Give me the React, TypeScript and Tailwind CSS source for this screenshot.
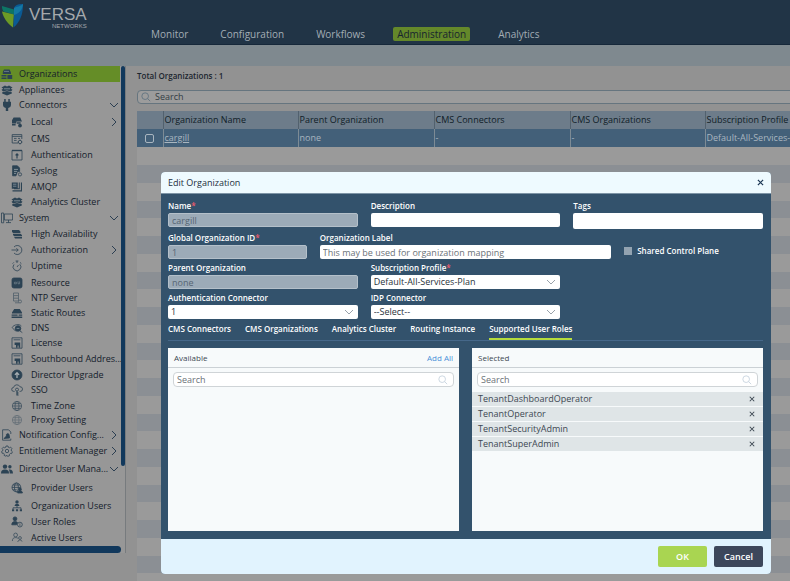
import React from 'react';

type IconName =
  | 'org' | 'appliance' | 'plug' | 'local' | 'cms' | 'auth' | 'syslog' | 'amqp' | 'system' | 'ha'
  | 'login' | 'uptime' | 'resource' | 'ntp' | 'routes' | 'dns' | 'license' | 'upgrade' | 'sso'
  | 'globe' | 'proxy' | 'notify' | 'gear' | 'users' | 'provider' | 'orgusers' | 'roles' | 'active';

const globe = (
  <g>
    <circle cx="6" cy="6" r="4.6" />
    <ellipse cx="6" cy="6" rx="2" ry="4.6" />
    <path d="M1.4 6h9.2M2.2 3.6h7.6M2.2 8.4h7.6" />
  </g>
);

const icons: Record<IconName, React.ReactNode> = {
  org: (
    <g fill="currentColor" stroke="none">
      <path d="M3 1.5h5.5l1.5 3v1.6H1.8V4z" />
      <path d="M.5 7h5v1.6h-5zM.5 9.4h5V11h-5zM6.4 7h4.8v4H6.4z" />
      <path d="M3 3.4h5" stroke="#8fa0a8" strokeWidth=".6" />
    </g>
  ),
  appliance: (
    <g fill="currentColor" stroke="none">
      <path d="M.5 3.6 4 1.6l2 1 2-1 3.5 2-1.8 1.2 1.8 1L10 7.6 6 6.4 2 7.6.5 5.8l1.8-1z" />
      <path d="M1.2 8.2 6 7l4.8 1.2v1.4L6 11.4 1.2 9.6z" />
      <path d="M3 4.8h6" stroke="#9aa4aa" strokeWidth=".7" />
    </g>
  ),
  plug: (
    <g fill="currentColor" stroke="none">
      <path d="M3.2 0h1.500v3H3.200zM7.300 0h1.500v3H7.300zM2 2.800h8v3c0 1.800-1.200 3-2.800 3.200V12H4.800V9C3.200 8.800 2 7.600 2 5.800z" />
    </g>
  ),
  local: (
    <g fill="currentColor" stroke="none">
      <path d="M2.600 1.600h6.600l1.800 3.800H5.400v2H1V4.200z" />
      <path d="M1 8h3.600v1.400H1zM6 6.200h3.600v1.600H6z" />
      <circle cx="9" cy="9.600" r="1.900" />
    </g>
  ),
  cms: (
    <g>
      <path d="M7 10H1.200V1.600h9.600V6" />
      <path d="M1.200 3.400h9.600M3 5.400h2.600M3 7.400h2.600M7 5.400h2" />
      <circle cx="9" cy="9" r="1.700" />
      <path d="M9 6.600v.8M9 10.600v.8M6.600 9h.8M10.600 9h.8" />
    </g>
  ),
  auth: (
    <g>
      <path d="M1 1.500h10v9.500H1z" />
      <path d="M1 1.500h10" strokeWidth="1.400" />
      <path d="M6 9.400V5M4.600 6.400 6 4.800l1.400 1.600" strokeWidth="1.200" />
    </g>
  ),
  syslog: (
    <g>
      <path d="M1.600.8h4.800L8.600 3v3.600H6.400L5 10.800H1.600z" fill="currentColor" />
      <path d="M3 4.400h4M3 6.400h3M3 8.400h2" stroke="#98a2a8" />
      <circle cx="9" cy="9.400" r="1.600" />
    </g>
  ),
  amqp: (
    <g fill="currentColor" stroke="none">
      <path d="M.8 1.500h6v6.300h-6zM7.800 1.500h1v6.700H3v-1h4.800zM9.900 1.500H11v9H1.500V9.200h8.400z" />
      <path d="M2 3.200h3.400M2 5.200h3.400" stroke="#9aa4aa" strokeWidth=".7" />
    </g>
  ),
  system: (
    <g>
      <path d="M3.400 2h8.200v6H3.400z" />
      <path d="M.5 1h2.200v9.800H.5zM5 10.600h5M7.500 8v2.600" />
    </g>
  ),
  ha: (
    <g fill="currentColor" stroke="none">
      <path d="M1 2h7l1.400 1.400V5H2.200L1 4zM2 5.800h7.400L11 7v1H3L2 7zM3 8.800h8v1.700H4z" />
    </g>
  ),
  login: (
    <g>
      <path d="M3 3a4.500 4.500 0 1 1 0 6" />
      <path d="M.5 6h6.700M5.400 4.200 7.200 6 5.400 7.800" />
    </g>
  ),
  uptime: (
    <g>
      <path d="M8.800 4.200A3.900 3.900 0 1 1 3 4.400" />
      <path d="M4.600 1h2.800M6 1v2M6 7l1.500-2M9 2.400l1.400 1.300M2.800 2.400 1.600 3.600" />
    </g>
  ),
  resource: (
    <g>
      <rect x="1" y="1" width="10" height="10" rx="1.800" fill="currentColor" />
      <path d="M3.400 5.200h2v1.600h-2zM7 4.400v2.400h1.600V4.400" stroke="#7d8b95" strokeWidth=".6" />
    </g>
  ),
  ntp: (
    <g opacity=".65">
      <path d="M2.500 1h5v8h-5zM2.500 3.600h5M2.500 6.200h5M4 10.800h4" />
      <circle cx="9" cy="9.500" r="1.500" />
    </g>
  ),
  routes: (
    <g fill="currentColor" stroke="none">
      <path d="M3.200 2h5.600L11 5.400v1.200H1V5.400zM.6 7.400h6v1.400h-6zM.6 9.600h10.600V11H.6zM7.600 7.400h3.600v1.400H7.600z" />
    </g>
  ),
  dns: (
    <g>
      <path d="M1 5.500c2-3 7-4 9.400-1.500M1.500 5.500c1 2 2 3 4 3.600" />
      <circle cx="7" cy="6.500" r="2.800" fill="currentColor" />
      <path d="M9 9l2.300 1.600M5.800 5.600h2.400" />
      <path d="M5.600 6.400h2.800" stroke="#9aa4aa" strokeWidth=".7" />
    </g>
  ),
  license: (
    <g>
      <path d="M1 .8h10v10.400H1z" />
      <path d="M2.600 2.800h6.800" />
      <path d="M3.600 5.500h5.600v5.200H7.600V8.500h-1v2.200H5V8H3.600z" fill="currentColor" stroke="none" />
    </g>
  ),
  upgrade: (
    <g>
      <circle cx="6" cy="6" r="5" fill="currentColor" />
      <path d="M6 9V4.200M3.900 5.900 6 3.700l2.100 2.200" stroke="#a7aeb2" strokeWidth="1.300" />
    </g>
  ),
  sso: (
    <g>
      <path d="M3.600 7.400H2.800a2 2 0 0 1-.2-4A3.400 3.400 0 0 1 9 2.800a2.300 2.300 0 0 1 .4 4.600h-.8" />
      <circle cx="6" cy="5.600" r="1.500" />
      <path d="M6 7.200v4.400M6 9h1.600M6 11h1.600" strokeWidth="1.200" />
    </g>
  ),
  globe: <g opacity=".8">{globe}</g>,
  proxy: <g opacity=".45">{globe}</g>,
  notify: (
    <g>
      <path d="M9.800 5V3L7.600.8H1.600v10.400h8.200V9.600" />
      <path d="M3 9.500 5.400 7V5.400a1.500 1.500 0 0 1 2.800.8L8.600 9z" fill="currentColor" />
    </g>
  ),
  gear: (
    <g>
      <circle cx="6" cy="6" r="1.700" />
      <path d="M5 1h2l.3 1.300 1.100.5L9.600 2.100 11 3.700l-.8 1.100.2 1.200 1 .8-.8 1.800-1.300-.1-.9.900.1 1.300-1.900.7L6 10.300l-1.100.9-1.800-.8.200-1.300-.8-.9-1.300.1L.6 6.500l1.100-.7.200-1.100-.8-1.100 1.400-1.500 1.200.7 1-.5z" />
    </g>
  ),
  users: (
    <g fill="currentColor" stroke="none">
      <circle cx="4" cy="3.600" r="2.200" />
      <path d="M0 10.400c0-2.600 1.200-3.800 4-3.800s4 1.200 4 3.800z" />
      <circle cx="8.900" cy="3.800" r="1.700" />
      <path d="M8.700 10.400c0-1.800-.2-2.900-1-3.900 2.600-.5 4.300.7 4.300 3.900z" />
    </g>
  ),
  provider: (
    <g>
      <circle cx="5.400" cy="5.400" r="4.400" />
      <ellipse cx="5.400" cy="5.400" rx="2" ry="4.400" />
      <path d="M1 5.400h8.800M1.800 3h7.200M1.800 7.800h4" />
      <circle cx="9" cy="7.400" r="1.400" fill="currentColor" />
      <path d="M6.600 11c0-1.500.8-2 2.400-2s2.400.5 2.400 2z" fill="currentColor" />
    </g>
  ),
  orgusers: (
    <g fill="currentColor" stroke="none">
      <circle cx="6" cy="2" r="1.700" />
      <path d="M3.600 6c0-1.500.8-2.100 2.400-2.100S8.400 4.500 8.400 6z" />
      <path d="M6 6v2M2 9V7.800h8V9" fill="none" stroke="currentColor" />
      <path d="M1 9.200h2.200v2H1zM4.900 9.200h2.200v2H4.900zM8.800 9.200H11v2H8.800z" />
    </g>
  ),
  roles: (
    <g>
      <circle cx="4" cy="2.800" r="1.900" fill="currentColor" />
      <path d="M.8 8.800c0-2.200 1-3.200 3.200-3.200 1.200 0 2 .3 2.500.9L5.600 8.800z" fill="currentColor" />
      <circle cx="8.900" cy="8.600" r="2.400" />
      <path d="M8.900 8.200v1.700M8.900 7v.6" />
    </g>
  ),
  active: (
    <g opacity=".85">
      <circle cx="4.600" cy="3" r="1.900" />
      <path d="M1.400 9c0-2.400 1-3.400 3.200-3.400 1 0 1.800.2 2.300.7" />
      <circle cx="9" cy="6" r="1.400" />
      <path d="M6.800 10c.2-1.400 1-2 2.200-2s1.800.6 2 1.600" />
    </g>
  ),
};

function Icon({ name }: { name: IconName }) {
  return (
    <svg viewBox="0 0 12 12" className="size-3 shrink-0 text-[#2c4354]" fill="none" stroke="currentColor" strokeWidth=".8" aria-hidden="true">
      {icons[name]}
    </svg>
  );
}

function Chevron({ open, className = '' }: { open: boolean; className?: string }) {
  return (
    <svg viewBox="0 0 10 10" className={`size-[10px] shrink-0 ${className}`} fill="none" stroke="currentColor" strokeWidth="1" aria-hidden="true">
      <path d={open ? 'M1 3l4 4 4-4' : 'M3 1l4 4-4 4'} />
    </svg>
  );
}

function SearchIcon({ className }: { className: string }) {
  return (
    <svg viewBox="0 0 12 12" className={className} fill="none" stroke="currentColor" strokeWidth="1" aria-hidden="true">
      <circle cx="5" cy="5" r="4" />
      <path d="M8 8l3 3" />
    </svg>
  );
}

type Item = { label: string; icon: IconName; height: string; child?: boolean; open?: boolean; active?: boolean };

const items: Item[] = [
  { label: 'Organizations', icon: 'org', height: 'h-4', active: true },
  { label: 'Appliances', icon: 'appliance', height: 'h-[15px]' },
  { label: 'Connectors', icon: 'plug', height: 'h-4', open: true },
  { label: 'Local', icon: 'local', height: 'h-[18px]', child: true, open: false },
  { label: 'CMS', icon: 'cms', height: 'h-4', child: true },
  { label: 'Authentication', icon: 'auth', height: 'h-4', child: true },
  { label: 'Syslog', icon: 'syslog', height: 'h-4', child: true },
  { label: 'AMQP', icon: 'amqp', height: 'h-[15px]', child: true },
  { label: 'Analytics Cluster', icon: 'appliance', height: 'h-4', child: true },
  { label: 'System', icon: 'system', height: 'h-[15px]', open: true },
  { label: 'High Availability', icon: 'ha', height: 'h-[18px]', child: true },
  { label: 'Authorization', icon: 'login', height: 'h-[14px]', child: true, open: false },
  { label: 'Uptime', icon: 'uptime', height: 'h-[18px]', child: true },
  { label: 'Resource', icon: 'resource', height: 'h-4', child: true },
  { label: 'NTP Server', icon: 'ntp', height: 'h-[14px]', child: true },
  { label: 'Static Routes', icon: 'routes', height: 'h-[15px]', child: true },
  { label: 'DNS', icon: 'dns', height: 'h-[15px]', child: true },
  { label: 'License', icon: 'license', height: 'h-4', child: true },
  { label: 'Southbound Addres...', icon: 'license', height: 'h-4', child: true },
  { label: 'Director Upgrade', icon: 'upgrade', height: 'h-[15px]', child: true },
  { label: 'SSO', icon: 'sso', height: 'h-4', child: true },
  { label: 'Time Zone', icon: 'globe', height: 'h-[15px]', child: true },
  { label: 'Proxy Setting', icon: 'proxy', height: 'h-[14px]', child: true },
  { label: 'Notification Config...', icon: 'notify', height: 'h-[15px]', open: false },
  { label: 'Entitlement Manager', icon: 'gear', height: 'h-[18px]', open: false },
  { label: 'Director User Mana...', icon: 'users', height: 'h-[18px]', open: true },
  { label: 'Provider Users', icon: 'provider', height: 'h-5', child: true },
  { label: 'Organization Users', icon: 'orgusers', height: 'h-4', child: true },
  { label: 'User Roles', icon: 'roles', height: 'h-4', child: true },
  { label: 'Active Users', icon: 'active', height: 'h-4', child: true },
];

function Sidebar() {
  return (
    <aside className="w-[126px] shrink-0 self-start border-r border-[#777b7e] bg-[#979797]">
      <div className="flex">
        <nav className="min-w-0 flex-1" aria-label="Administration">
          <ul>
            {items.map((item) => (
              <li key={item.label} className={item.active ? 'bg-[#658d27]' : ''}>
                <a
                  href="#"
                  className={`flex items-center whitespace-nowrap pr-px text-[9px] text-[#14202b] ${item.height} ${item.child ? 'pl-[11px]' : 'pl-px'}`}
                >
                  <Icon name={item.icon} />
                  <span className={item.child ? 'pl-2' : 'pl-[6px]'}>{item.label}</span>
                  {item.open !== undefined && <Chevron open={item.open} className="ml-auto text-[#2c3f52]" />}
                </a>
              </li>
            ))}
          </ul>
        </nav>
        <div className="ml-px h-[400px] w-1 rounded-sm bg-[#11385c]" />
      </div>
      <div className="mr-1 h-[7px] rounded-r-sm bg-[#11385c]" />
    </aside>
  );
}

const tabs = ['Monitor', 'Configuration', 'Workflows', 'Administration', 'Analytics'];

function Header() {
  return (
    <header className="flex h-[45px] items-end border-b border-[#16283a] bg-[#213446]">
      <div className="flex w-[147px] shrink-0 gap-[6px] self-start pl-px pt-[3px]">
        <svg viewBox="0 0 22 25" className="h-[25px] w-[22px]" aria-hidden="true">
          <path d="M1 3 13 6.500v5L2.500 8.500C1.500 7 .8 5 1 3z" fill="#0d7566" />
          <path d="M1 8.500 13 11.500 12 24.500C6 20 2 14 1 8.500z" fill="#6c9a26" />
          <path d="M13 5C14 2 17 .8 22 1c.2 9-2.600 18-9.500 23.500z" fill="#0b5a94" />
          <path d="M13 5c3-2 6-1 9-4-.4 5-3 9-9 11z" fill="#1479a4" />
        </svg>
        <div className="flex flex-col items-end pt-1 font-['Liberation_Sans',sans-serif] text-[#a5a9ad]">
          <span className="text-[17px] leading-4">VERSA</span>
          <span className="text-[6px] leading-[6px]">NETWORKS</span>
        </div>
      </div>
      <nav className="flex gap-6 pb-[3px] text-[10px] leading-[14px] text-[#a3adb5]" aria-label="Main">
        {tabs.map((t) => (
          <a key={t} href="#" className={t === 'Administration' ? 'rounded-xs bg-[#64882a] px-1 text-[#17242e]' : 'px-1'}>
            {t}
          </a>
        ))}
      </nav>
    </header>
  );
}

const columns = ['Organization Name', 'Parent Organization', 'CMS Connectors', 'CMS Organizations', 'Subscription Profile'];
const stripes = Array.from({ length: 25 }, (_, i) => i);

function Main() {
  return (
    <main className="min-w-0 flex-1 overflow-hidden pl-[11px] text-[9px]">
      <h1 className="h-6 pt-[3px] text-[8px] font-semibold leading-[14px] text-[#1b252e]">Total Organizations : 1</h1>
      <div className="-mr-1 flex h-[14px] items-center gap-1 rounded-sm border border-[#66757f] bg-[#9c9c9c] pl-[3px]">
        <SearchIcon className="size-[10px] text-[#5d7180]" />
        <input aria-label="Search organizations" placeholder="Search" className="min-w-0 flex-1 bg-transparent text-[9px] leading-3 outline-none placeholder:text-[#343d44]" />
      </div>
      <table className="mt-[7px] w-[703px] table-fixed border-collapse text-left leading-3">
        <colgroup>
          <col className="w-[26px]" />
          <col className="w-[135px]" />
          <col className="w-[136px]" />
          <col className="w-[136px]" />
          <col className="w-[135px]" />
          <col className="w-[135px]" />
        </colgroup>
        <thead>
          <tr className="h-[18px] bg-[#6d7c8a] text-[#101c28]">
            <th />
            {columns.map((c) => (
              <th key={c} className="border-l border-[#52616e] p-0 pl-px font-normal">{c}</th>
            ))}
          </tr>
        </thead>
        <tbody>
          <tr className="h-[18px] bg-[#436079] text-[#a9b6c0]">
            <td className="p-0 text-center align-middle">
              <input type="checkbox" aria-label="Select cargill" className="mx-auto block size-[9px] appearance-none rounded-xs border border-[#a9b6c0]" />
            </td>
            <td className="border-l border-[#7d8b95] p-0 pl-px"><a href="#" className="underline">cargill</a></td>
            <td className="border-l border-[#7d8b95] p-0 pl-px">none</td>
            <td className="border-l border-[#7d8b95] p-0 pl-px">-</td>
            <td className="border-l border-[#7d8b95] p-0 pl-px">-</td>
            <td className="whitespace-nowrap border-l border-[#7d8b95] p-0 pl-px">Default-All-Services-Plan</td>
          </tr>
        </tbody>
      </table>
      <div aria-hidden="true">
        {stripes.map((i) => (
          <div key={i} className={`${i % 4 === 3 ? 'h-[17px]' : 'h-[18px]'} ${i % 2 ? 'bg-[#8b8f94]' : 'bg-[#9a9a9a]'}`} />
        ))}
      </div>
    </main>
  );
}

const inputBase = 'block w-full rounded-xs px-[3px] text-[9px] outline-none';

function Label({ id, text, required }: { id: string; text: string; required?: boolean }) {
  return (
    <label htmlFor={id} className="block h-[14px] whitespace-nowrap text-[8px] font-semibold leading-[14px] text-white">
      {text}
      {required && <span className="text-[#ef5a6b]">*</span>}
    </label>
  );
}

type FieldProps = { id: string; label: string; required?: boolean; value?: string; placeholder?: string; disabled?: boolean; tall?: boolean };

function Field({ id, label, required, value, placeholder, disabled, tall }: FieldProps) {
  return (
    <div>
      <Label id={id} text={label} required={required} />
      <input
        id={id}
        defaultValue={value}
        placeholder={placeholder}
        disabled={disabled}
        className={`${inputBase} ${tall ? 'h-4' : 'h-[14px]'} ${disabled ? 'border border-[#b4c0ca] bg-[#9cabb8] text-[#566573]' : 'bg-white text-[#3b4650] placeholder:text-[#6b7278]'}`}
      />
    </div>
  );
}

function SelectField({ id, label, required, value }: { id: string; label: string; required?: boolean; value: string }) {
  return (
    <div>
      <Label id={id} text={label} required={required} />
      <div className="grid items-center">
        <select id={id} defaultValue={value} className={`${inputBase} col-start-1 row-start-1 h-[14px] appearance-none bg-white text-[#2a333b]`}>
          <option>{value}</option>
        </select>
        <Chevron open className="pointer-events-none col-start-1 row-start-1 mr-1 justify-self-end text-[#9aa3ab]" />
      </div>
    </div>
  );
}

function PanelSearch({ label }: { label: string }) {
  return (
    <div className="mx-[5px] mt-1 flex h-[15px] items-center rounded-sm border border-[#cfd4d7] bg-white pl-[3px] pr-[5px]">
      <input aria-label={label} placeholder="Search" className="min-w-0 flex-1 text-[9px] leading-3 outline-none placeholder:text-[#6b7278]" />
      <SearchIcon className="size-[10px] text-[#c3d0dc]" />
    </div>
  );
}

const modalTabs = ['CMS Connectors', 'CMS Organizations', 'Analytics Cluster', 'Routing Instance', 'Supported User Roles'];
const roles = ['TenantDashboardOperator', 'TenantOperator', 'TenantSecurityAdmin', 'TenantSuperAdmin'];

function CloseIcon({ className }: { className: string }) {
  return (
    <svg viewBox="0 0 8 8" className={className} fill="none" stroke="currentColor" strokeWidth="1.400" aria-hidden="true">
      <path d="M1 1l6 6M7 1 1 7" />
    </svg>
  );
}

function Dialog() {
  return (
    <section role="dialog" aria-label="Edit Organization" className="absolute left-[161px] right-[19px] top-[172px] overflow-hidden rounded-sm bg-[#33526c]">
      <header className="flex h-[22px] items-center justify-between border-b border-[#7d94a6] bg-[#eefaff] px-[7px] text-[9px] text-[#1d2f40]">
        <h2>Edit Organization</h2>
        <button type="button" aria-label="Close"><CloseIcon className="size-[7px] text-[#1f3a57]" /></button>
      </header>

      <div className="pb-2 pl-[7px] pr-2 pt-[5px]">
        <form className="flex flex-col gap-[2px]">
          <div className="grid grid-cols-3 gap-[13px]">
            <Field id="name" label="Name" required value="cargill" disabled />
            <Field id="description" label="Description" />
            <Field id="tags" label="Tags" tall />
          </div>
          <div className="grid grid-cols-[1fr_2.1fr_1fr] gap-[13px]">
            <Field id="gid" label="Global Organization ID" required value="1" disabled />
            <Field id="olabel" label="Organization Label" placeholder="This may be used for organization mapping" />
            <label className="flex h-4 items-center gap-[5px] self-end whitespace-nowrap text-[8px] font-semibold text-white">
              <input type="checkbox" className="size-2 appearance-none bg-[#93a3b1]" />
              Shared Control Plane
            </label>
          </div>
          <div className="grid grid-cols-3 gap-[13px]">
            <Field id="parent" label="Parent Organization" value="none" disabled />
            <SelectField id="profile" label="Subscription Profile" required value="Default-All-Services-Plan" />
          </div>
          <div className="grid grid-cols-3 gap-[13px]">
            <SelectField id="authc" label="Authentication Connector" value="1" />
            <SelectField id="idp" label="IDP Connector" value="--Select--" />
          </div>
        </form>

        <div role="tablist" className="flex h-[22px] gap-[14px] border-b border-[#46688a] text-[8px] font-semibold text-white">
          {modalTabs.map((t, i) => (
            <button
              key={t}
              type="button"
              role="tab"
              aria-selected={i === 4}
              className={`border-b-2 whitespace-nowrap ${i === 4 ? 'border-[#b5dc3c]' : 'border-transparent'}`}
            >
              {t}
            </button>
          ))}
        </div>

        <div className="mt-[7px] grid h-[183px] grid-cols-2 gap-[13px] text-[8px] text-[#3d4852]">
          <div className="bg-[#f7fafb]">
            <div className="flex h-5 items-center justify-between border-b border-[#cbd1d5] px-[6px]">
              <h3>Available</h3>
              <button type="button" className="text-[#4a90d9]">Add All</button>
            </div>
            <PanelSearch label="Search available roles" />
          </div>
          <div className="bg-[#f7fafb]">
            <div className="flex h-5 items-center border-b border-[#cbd1d5] px-[6px]">
              <h3>Selected</h3>
            </div>
            <PanelSearch label="Search selected roles" />
            <ul className="mt-[5px] flex flex-col gap-px">
              {roles.map((r) => (
                <li key={r} className="flex h-[14px] items-center justify-between bg-[#dfe5e7] pl-[6px] pr-2 text-[9px]">
                  {r}
                  <button type="button" aria-label={`Remove ${r}`}><CloseIcon className="size-[6px] text-[#3d4852]" /></button>
                </li>
              ))}
            </ul>
          </div>
        </div>
      </div>

      <footer className="flex h-[35px] items-center justify-end gap-[7px] bg-[#e1f3fe] px-2 text-[9px] font-semibold text-white">
        <button type="button" className="h-[21px] w-[49px] rounded-xs bg-[#a9d551]">OK</button>
        <button type="button" className="h-[21px] w-[49px] rounded-xs bg-[#3d475b]">Cancel</button>
      </footer>
    </section>
  );
}

export default function App() {
  return (
    <div className="relative flex h-screen flex-col overflow-hidden bg-[#929292] font-['Open_Sans',sans-serif]">
      <Header />
      <div className="h-[21px] shrink-0 bg-[#7f898f]" />
      <div className="flex min-h-0 flex-1">
        <Sidebar />
        <Main />
      </div>
      <Dialog />
    </div>
  );
}
